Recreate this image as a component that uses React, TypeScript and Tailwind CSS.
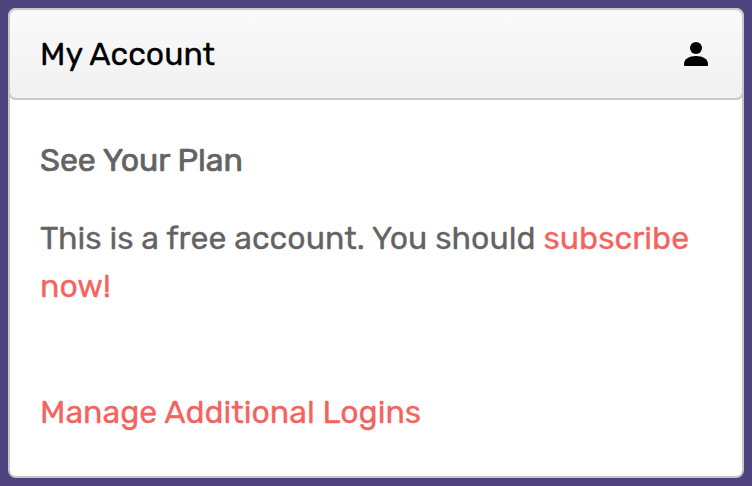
import type { ReactNode } from 'react';

interface PanelProps {
  title: string;
  icon: ReactNode;
  children: ReactNode;
}

function UserIcon() {
  return (
    <svg width="24" height="24" viewBox="0 0 24 24" fill="currentColor" aria-hidden="true">
      <circle cx="12" cy="6" r="6" />
      <path d="M0 22C0 17.2 5.2 14 12 14s12 3.2 12 8c0 1.4-.3 2-1 2H1c-.7 0-1-.6-1-2z" />
    </svg>
  );
}

function Panel({ title, icon, children }: PanelProps) {
  return (
    <section className="flex grow flex-col rounded-lg bg-[#c8c8c8] p-0.5">
      <div className="flex grow flex-col rounded-md bg-white">
        <header className="-mx-0.5 -mt-0.5 flex h-[92px] items-center justify-between rounded-lg border-2 border-[#c8c8c8] bg-linear-to-b from-[#fafafa] to-[#f1f1f1] px-[30px] text-black">
          <h2 className="text-[32px] leading-[48px]">{title}</h2>
          <span className="mr-1">{icon}</span>
        </header>
        <div className="px-[30px] pt-9">{children}</div>
      </div>
    </section>
  );
}

export default function App() {
  return (
    <main className="flex h-screen bg-[#4f437d] p-2 font-['Rubik','Roboto',sans-serif] text-[32px] leading-[48px] text-[#636363] [-webkit-text-stroke:0.3px_currentColor]">
      <Panel title="My Account" icon={<UserIcon />}>
        <h3 className="[-webkit-text-stroke:0.7px_currentColor]">See Your Plan</h3>
        <p className="mt-[30px] tracking-[0.02px]">
          {'This is a free account. You should '}
          <a href="#" className="text-[#f4645f] [-webkit-text-stroke:0.3px_currentColor]">
            subscribe now!
          </a>
        </p>
        <p className="mt-[78px]">
          <a href="#" className="text-[#f4645f] [-webkit-text-stroke:0.3px_currentColor]">
            Manage Additional Logins
          </a>
        </p>
      </Panel>
    </main>
  );
}
